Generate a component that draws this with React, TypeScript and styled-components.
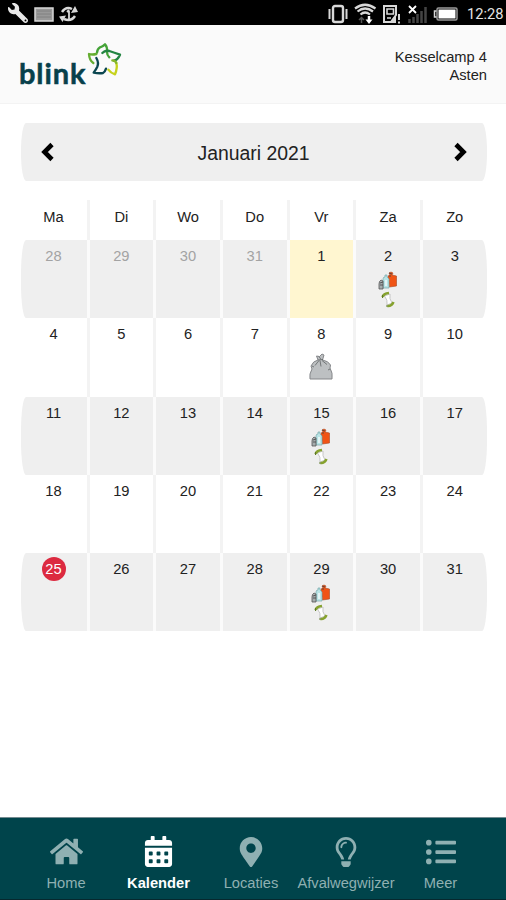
import React from 'react';
import styled, { createGlobalStyle, css } from 'styled-components';
import { FaHome, FaCalendarAlt, FaMapMarkerAlt, FaRegLightbulb, FaListUl, FaWrench } from 'react-icons/fa';

const GlobalStyle = createGlobalStyle`
  * { box-sizing: border-box; }
  body { margin: 0; background: #fff; font-family: "Liberation Sans", Arial, sans-serif; font-size: 14.7px; color: #222; }
  button { border: 0; padding: 0; background: none; font: inherit; color: inherit; }
  svg { display: block; }
`;

const Screen = styled.div`
  display: flex;
  flex-direction: column;
  width: 506px;
  height: 900px;
  overflow: hidden;
`;

const StatusBar = styled.div`
  display: flex;
  justify-content: space-between;
  height: 25px;
  background: #000;
  flex: none;
`;

const StatusGroup = styled.div`
  display: flex;
  align-items: center;
  height: 26px;
`;

const Clock = styled.span`
  font: 14.7px/26px Roboto, sans-serif;
  width: 39px;
  color: #e4e4e4;
  padding-top: 1px;
`;

const Header = styled.header`
  display: flex;
  justify-content: space-between;
  height: 79px;
  flex: none;
  padding: 0 19px;
  background: #fafafa;
  border-bottom: 1px solid #f3f3f3;
`;

const Brand = styled.div`
  display: flex;
  color: #07404b;
`;

const BrandName = styled.span`
  font: 700 29px/34px Lato, sans-serif;
  letter-spacing: 0.9px;
  -webkit-text-stroke: 0.5px currentColor;
  margin-top: 31px;
  width: 66px;
`;

const BrandMark = styled.svg`
  margin-top: 15px;
`;

const Address = styled.address`
  font-style: normal;
  line-height: 18px;
  text-align: right;
  padding-top: 23px;
`;

const Main = styled.main`
  flex: 1;
  padding: 19px 19.5px 0 20.5px;
`;

const MonthBar = styled.div`
  display: flex;
  align-items: center;
  justify-content: space-between;
  height: 58px;
  padding: 0 19px;
  border-radius: 5px / 28px;
  background: #efefef;
`;

const MonthTitle = styled.h1`
  margin: 0;
  font-size: 19.4px;
  font-weight: 400;
  line-height: 24px;
  padding-top: 2px;
`;

const Calendar = styled.div`
  margin-top: 19px;
`;

const Week = styled.div<{ $shaded?: boolean; $head?: boolean }>`
  display: grid;
  grid-template-columns: 69px repeat(5, 66.7px) 1fr;
  height: ${p => (p.$head ? '40px' : '78.3px')};
  border-radius: ${p => (p.$head ? '0' : '5px / 34px')};
  overflow: hidden;
  background: ${p => (p.$shaded ? '#efefef' : '#fff')};
  --rule: ${p => (p.$shaded ? '#fbfbfb' : '#f3f3f3')};
  --inset: ${p => (p.$head ? '8px' : '7px')};
`;

const Cell = styled.div<{ $muted?: boolean; $marked?: boolean }>`
  display: flex;
  flex-direction: column;
  align-items: center;
  padding-top: var(--inset);
  border-right: 3px solid var(--rule);
  color: ${p => (p.$muted ? '#a3a3a3' : '#222')};
  background: ${p => (p.$marked ? '#fff6d0' : 'transparent')};
  &:last-child { border-right: 0; }
`;

const DayNumber = styled.span<{ $today?: boolean }>`
  line-height: 19px;
  ${p =>
    p.$today &&
    css`
      width: 24px;
      height: 24px;
      margin-top: -3px;
      line-height: 25px;
      text-align: center;
      border-radius: 50%;
      background: #dc2a40;
      color: #fff;
    `}
`;

type Pickup = 'paper' | 'bag';

const PickupIcons = styled.div<{ $kind: Pickup }>`
  display: flex;
  flex-direction: column;
  align-items: center;
  margin-top: ${p => (p.$kind === 'bag' ? '9px' : '5px')};
`;

const TabBar = styled.nav`
  display: grid;
  grid-template-columns: 93px 92px 93px 97px 92px;
  height: 83px;
  flex: none;
  padding-left: 19.5px;
  background: #00444b;
  border-top: 1px solid #748b90;
  border-bottom: 1px solid #06282e;
`;

const Tab = styled.button<{ $active?: boolean }>`
  display: flex;
  flex-direction: column;
  align-items: center;
  padding-top: 15px;
  font-weight: ${p => (p.$active ? 700 : 400)};
  color: ${p => (p.$active ? '#fff' : '#8fb0b2')};
`;

const TabIcon = styled.span`
  display: flex;
  align-items: center;
  justify-content: center;
  height: 37px;
  margin-bottom: 3px;
`;

const TabLabel = styled.span`
  line-height: 20px;
`;

const Wrench = styled(FaWrench)`
  width: 20px;
  height: 20px;
  margin: 0 1px 0 8px;
  color: #e8e8e8;
  transform: scaleX(-1);
`;

function StatusIcons() {
  return (
    <svg width="148" height="25" viewBox="0 0 148 25" fill="none" stroke="#d8d8d8">
      <rect x="14" y="5" width="10" height="16" rx="2" strokeWidth="2.4" />
      <path d="M10.500 8v10M27.500 8v10" strokeWidth="2" />
      <path d="M36 7.500q10-7.500 20.500 0M38.500 10.500q7.500-6 15.500 0M41.500 13.500q4.500-4 9.500 0" strokeWidth="2.200" />
      <path d="M42.500 22v-5m-2.500 2 2.500-2.500 2.500 2.500" stroke="#555" strokeWidth="1.500" />
      <path d="M50 15v4" stroke="#fff" strokeWidth="2.500" />
      <path d="M46.500 18.500h7l-3.500 4.500z" fill="#fff" stroke="none" />
      <path d="M65 5h12v9l-5 7h-7z" strokeWidth="2" />
      <path d="M68 8h6.500v5H68zM68 17h4" strokeWidth="1.600" />
      <path d="m70 22 7-8v8z" fill="#d8d8d8" stroke="none" />
      <path d="M80 13v6m0 1.500v2" strokeWidth="2" />
      <path d="m90 5 7 7m0-7-7 7" stroke="#fff" strokeWidth="1.800" />
      <path d="M90.500 18v4M94.500 16v6M98.500 13v9M102.500 10v12M106.500 6v16" stroke="#444" strokeWidth="2.500" />
      <rect x="118" y="7" width="20" height="12" rx="1.500" stroke="#999" strokeWidth="1.500" />
      <path d="M117.500 10h-2v6h2" strokeWidth="1.500" />
      <rect x="119.500" y="8.500" width="17" height="9" fill="#fff" stroke="none" />
    </svg>
  );
}

function NotificationIcons() {
  return (
    <svg width="52" height="25" viewBox="0 0 52 25" fill="none" stroke="#d8d8d8">
      <rect x="6" y="7" width="18" height="13" fill="#999" strokeWidth="1.500" />
      <path d="M8 10h14M8 13h14M8 16h14" stroke="#808080" />
      <path d="M33 11q4-6 10-3M46 15q-4 6-11 3" strokeWidth="2.500" />
      <path d="m42 12 7-1-3-6zM37 14.500l-7 1 3.500 5.500z" fill="#d8d8d8" stroke="none" />
      <path d="M40 9.500V18m-2-7 2-2m-2 10h4" strokeWidth="1.800" />
    </svg>
  );
}

function Star() {
  return (
    <BrandMark width="40" height="40" viewBox="0 0 120 120" fill="none" strokeWidth="7" strokeLinecap="round" strokeLinejoin="round">
      <path d="M36 38Q37 27 45 22Q53 20 60 13Q68 22 66 36Q66 46 73 52" stroke="#45a338" />
      <path d="M52 39Q60 30 73 33Q88 38 105 44Q98 60 86 62" stroke="#238442" />
      <path d="M34 42Q22 45 12 42Q13 61 25 69" stroke="#65ad31" />
      <path d="M34 54Q42 68 37 80Q33 88 26 98Q42 101 54 99Q60 96 63 86" stroke="#0b4650" />
      <path d="M94 69Q98 84 90 103Q77 99 70 89" stroke="#c6d21c" />
      <path d="M94 69Q91 62 82 61" stroke="#86b62b" />
    </BrandMark>
  );
}

function Chevron({ next }: { next?: boolean }) {
  return (
    <svg width="14" height="20" viewBox="0 0 14 20" fill="none" stroke="#000" strokeWidth="4.600">
      <path d={next ? 'm2 2.500 7.500 7.500L2 17.500' : 'm12 2.500L4.500 10l7.500 7.500'} />
    </svg>
  );
}

function Packaging() {
  return (
    <svg width="20" height="20" viewBox="0 0 20 20">
      <path d="m10 5 2-1-1-2 2-1 2 1-1 2 4.500 1v10l-7 1z" fill="#f05415" stroke="#a84720" strokeWidth=".6" />
      <path d="m11 2 3 1m-2 1v2" stroke="#65453a" fill="none" />
      <path d="M5 8q0-2 2-2V4h2v2l2 2v9H5z" fill="#b9e4e5" stroke="#75a7aa" strokeWidth=".7" />
      <path d="M8 9v6" stroke="#fff" strokeWidth="1.200" />
      <path d="M1 18v-5q0-3 2-4l2 1v8z" fill="#a6acad" stroke="#555" strokeWidth=".8" />
      <path d="m2 12 3-1m-3 3h3" stroke="#444" strokeWidth=".8" />
    </svg>
  );
}

function AppleCore() {
  return (
    <svg width="16" height="18" viewBox="0 0 16 18" fill="none">
      <path d="M4.500 5q3.500 4 2.500 9l5-2q-3-4-2-9z" fill="#fff" stroke="#bbb" strokeWidth=".8" />
      <path d="M2.500 6q1-3.500 6.500-4M7.500 15q4 .5 6-4" stroke="#86a22f" strokeWidth="2.600" />
      <path d="M2.500 7V4M7 16v-2" stroke="#5d7829" />
    </svg>
  );
}

function WasteBag() {
  return (
    <svg width="26" height="28" viewBox="0 0 26 28" fill="#bdc0c2" stroke="#85878a" strokeWidth="1" strokeLinejoin="round">
      <path d="M10 7 8.500 3l3 .5L14 1l2 1-1.500 5q6 1 8 5l-.5 3q3 5 2 11H2q-1-5 2-10l-1-3q2-5 7-6z" />
      <path d="m10 7 5-.5m-4-3 2 3m-2 1-4 5m5-5 1 6m1-6 5 4M4 13l2 1m14 3 2-1" fill="none" stroke="#606365" strokeWidth=".8" />
    </svg>
  );
}

const pickups: Record<string, Pickup> = { '0-5': 'paper', '1-4': 'bag', '2-4': 'paper', '4-4': 'paper' };
const weekdays = ['Ma', 'Di', 'Wo', 'Do', 'Vr', 'Za', 'Zo'];
const weeks = [0, 1, 2, 3, 4].map(w => weekdays.map((_, d) => w * 7 + d - 3));

const tabs = [
  { label: 'Home', icon: <FaHome size={33} /> },
  { label: 'Kalender', icon: <FaCalendarAlt size={31} />, active: true },
  { label: 'Locaties', icon: <FaMapMarkerAlt size={30} /> },
  { label: 'Afvalwegwijzer', icon: <FaRegLightbulb size={30} /> },
  { label: 'Meer', icon: <FaListUl size={30} /> },
];

export default function App() {
  return (
    <>
      <GlobalStyle />
      <Screen>
        <StatusBar>
          <StatusGroup>
            <Wrench />
            <NotificationIcons />
          </StatusGroup>
          <StatusGroup>
            <StatusIcons />
            <Clock>12:28</Clock>
          </StatusGroup>
        </StatusBar>
        <Header>
          <Brand>
            <BrandName>blink</BrandName>
            <Star />
          </Brand>
          <Address>
            Kesselcamp 4<br />Asten
          </Address>
        </Header>
        <Main>
          <MonthBar>
            <button aria-label="Vorige maand"><Chevron /></button>
            <MonthTitle>Januari 2021</MonthTitle>
            <button aria-label="Volgende maand"><Chevron next /></button>
          </MonthBar>
          <Calendar>
            <Week $head>
              {weekdays.map(day => (
                <Cell key={day}><DayNumber>{day}</DayNumber></Cell>
              ))}
            </Week>
            {weeks.map((days, w) => (
              <Week key={w} $shaded={w % 2 === 0}>
                {days.map((n, d) => {
                  const kind = pickups[`${w}-${d}`];
                  return (
                    <Cell key={d} $muted={n < 1} $marked={n === 1}>
                      <DayNumber $today={n === 25}>{n < 1 ? n + 31 : n}</DayNumber>
                      {kind && (
                        <PickupIcons $kind={kind}>
                          {kind === 'bag' ? <WasteBag /> : <><Packaging /><AppleCore /></>}
                        </PickupIcons>
                      )}
                    </Cell>
                  );
                })}
              </Week>
            ))}
          </Calendar>
        </Main>
        <TabBar>
          {tabs.map(tab => (
            <Tab key={tab.label} $active={tab.active}>
              <TabIcon>{tab.icon}</TabIcon>
              <TabLabel>{tab.label}</TabLabel>
            </Tab>
          ))}
        </TabBar>
      </Screen>
    </>
  );
}
